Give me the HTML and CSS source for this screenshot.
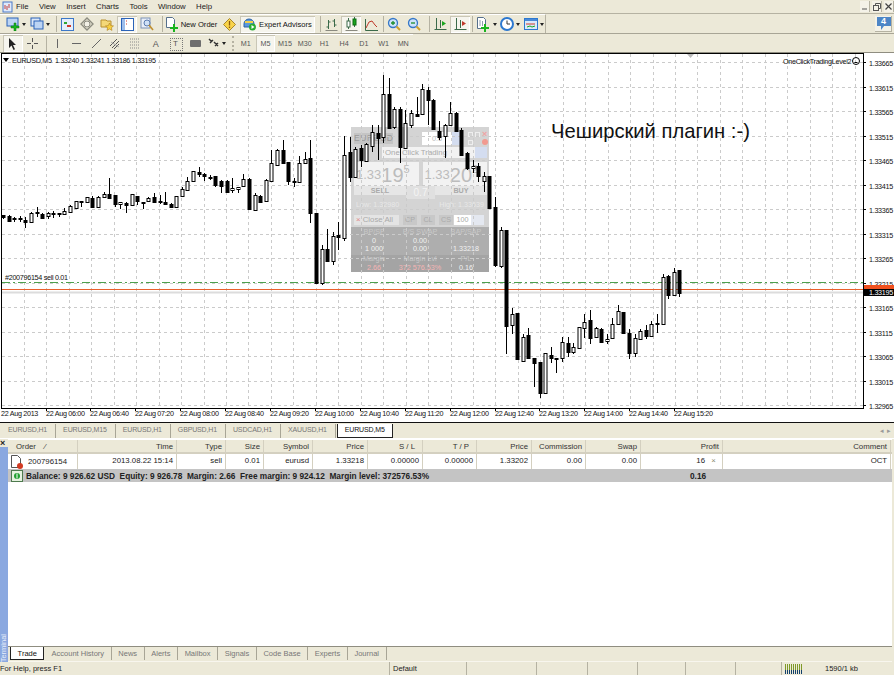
FILE: index.html
```html
<!DOCTYPE html>
<html lang="en">
<head>
    <meta charset="UTF-8">
    <meta name="viewport" content="width=device-width, initial-scale=1.0">
    <title>MetaTrader 4</title>
    <link rel="stylesheet" href="styles.css">
</head>
<body>
    <!-- Menu bar -->
    <div class="menubar">
        <svg class="app-icon" width="11" height="12" viewBox="0 0 11 12"><rect x="1" y="1" width="9" height="10" fill="#dfe9fa" stroke="#4a78c8"/><path d="M3 8V4M5 9V5M7 7V3" stroke="#c04040"/></svg>
        <span class="menu-item">File</span>
        <span class="menu-item">View</span>
        <span class="menu-item">Insert</span>
        <span class="menu-item">Charts</span>
        <span class="menu-item">Tools</span>
        <span class="menu-item">Window</span>
        <span class="menu-item">Help</span>
        <div class="window-btns">
            <span class="win-btn"><svg width="7" height="7"><path d="M1 6h5" stroke="#555"/></svg></span>
            <span class="win-btn"><svg width="8" height="8" fill="none" stroke="#555"><path d="M2.500 2.500v-2h5v5h-2"/><rect x=".5" y="2.500" width="5" height="5"/></svg></span>
            <span class="win-btn"><svg width="7" height="7"><path d="M.5.5l6 6M6.500.5l-6 6" stroke="#444" stroke-width="1.200"/></svg></span>
        </div>
    </div>

    <!-- Toolbars -->
    <div class="toolbar-row">
        <div class="toolbar tb-main">
            <span class="btn dd"><svg width="14" height="14" viewBox="0 0 14 14"><rect x="1" y="1" width="11" height="8" fill="#bcd4f4" stroke="#2b63b8"/><path d="M8 6h2v3h3v2h-3v3H8v-3H5V9h3z" fill="#19b41e" stroke="#0b7a10" stroke-width=".5"/></svg><i class="caret"></i></span>
            <span class="btn dd"><svg width="14" height="14" viewBox="0 0 14 14"><rect x="1" y="1" width="9" height="8" fill="#dbe7f8" stroke="#2b63b8"/><rect x="4" y="4" width="9" height="8" fill="#bcd4f4" stroke="#2b63b8"/></svg><i class="caret"></i></span>
            <span class="sep"></span>
            <span class="btn"><svg width="13" height="13" viewBox="0 0 13 13"><rect x=".5" y=".5" width="12" height="12" fill="#e4eefb" stroke="#3d78c8"/><path d="M3 4h3v2H3z" fill="#2fa52f"/><path d="M6 7h4v2H6z" fill="#d03a2a"/></svg></span>
            <span class="btn"><svg width="14" height="14" viewBox="0 0 14 14"><path d="M7 1l6 6-6 6-6-6z" fill="none" stroke="#8c8c80" stroke-width="1.400"/><circle cx="7" cy="7" r="3" fill="#f2f0e6" stroke="#8c8c80"/></svg></span>
            <span class="btn"><svg width="14" height="14" viewBox="0 0 14 14"><path d="M1 3h5l1 1h4v6H1z" fill="#f4d878" stroke="#b89030"/><path d="M9.500 6l1.200 2.600 2.800.3-2.100 1.800.6 2.700-2.500-1.400-2.500 1.400.6-2.700L5.500 8.900l2.800-.3z" fill="#f8d040" stroke="#b08020" stroke-width=".6"/></svg></span>
            <span class="btn pressed"><svg width="13" height="13" viewBox="0 0 13 13"><rect x=".5" y=".5" width="12" height="12" fill="#fff" stroke="#2b63b8"/><rect x="1" y="1" width="3" height="11" fill="#9dbdea"/><path d="M5 3h1M5 6h1" stroke="#d03a2a"/></svg></span>
            <span class="btn"><svg width="14" height="14" viewBox="0 0 14 14"><rect x="1" y="1" width="9" height="10" fill="#e8eef8" stroke="#7c93b8"/><circle cx="7" cy="6" r="3" fill="#cfe0f6" stroke="#5a7cb0"/><path d="M9 8l4 5" stroke="#c09030" stroke-width="1.600"/></svg></span>
            <span class="sep narrow"></span>
            <span class="btn text-btn order-btn"><svg width="14" height="15" viewBox="0 0 14 15"><path d="M1.500.5h6l2 2v8h-8z" fill="#fff" stroke="#56708c"/><path d="M8 7h2v3h3v2h-3v3H8v-3H5v-2h3z" fill="#19b41e"/></svg>New Order</span>
            <span class="btn"><svg width="13" height="13" viewBox="0 0 13 13"><path d="M6.500.5l6 6-6 6-6-6z" fill="#f9d44a" stroke="#a8872c"/><path d="M6.500 3v4.500M6.500 8.500v1.500" stroke="#8a5a10" stroke-width="1.300"/></svg></span>
            <span class="btn text-btn ea-btn"><svg width="14" height="14" viewBox="0 0 14 14"><path d="M1 7a5 5 0 0 1 10 0v3H1z" fill="#5a98dc" stroke="#2b63a8"/><path d="M2 5h8" stroke="#f2cf4a" stroke-width="2"/><circle cx="9.500" cy="10" r="3.500" fill="#28ad32"/><path d="M8.500 8l3 2-3 2z" fill="#fff"/></svg>Expert Advisors</span>
            <span class="sep"></span>
            <span class="btn"><svg width="13" height="13" viewBox="0 0 13 13" fill="none" stroke="#3b6a4a"><path d="M.5 12.500h12" stroke="#8a8a80"/><path d="M3.500 2v9M1.500 9h2M3.500 4h2"/><path d="M9.500 1v8M7.500 3h2M9.500 7h2"/></svg></span>
            <span class="btn pressed"><svg width="13" height="14" viewBox="0 0 13 14"><path d="M.5 13.500h12" stroke="#8a8a80"/><path d="M3.500 1v11M9.500 0v10" stroke="#3b6a4a"/><rect x="2" y="4" width="3" height="6" fill="#fff" stroke="#3b6a4a"/><rect x="8" y="2" width="3" height="6" fill="#19a51e" stroke="#0b6a10"/></svg></span>
            <span class="btn"><svg width="13" height="13" viewBox="0 0 13 13" fill="none"><path d="M.5 1v11.500H13" stroke="#3b6a4a"/><path d="M1 10l3-6 3-1 3 4 2 2" stroke="#c0392b"/></svg></span>
            <span class="sep tiny"></span>
            <span class="btn"><svg width="14" height="14" viewBox="0 0 14 14"><circle cx="6" cy="6" r="4.500" fill="#cfe3fa" stroke="#3678c8" stroke-width="1.300"/><path d="M4 6h4M6 4v4" stroke="#1d8f2a" stroke-width="1.300"/><path d="M9.500 9.500l3.500 3.500" stroke="#d0a030" stroke-width="2"/></svg></span>
            <span class="btn"><svg width="14" height="14" viewBox="0 0 14 14"><circle cx="6" cy="6" r="4.500" fill="#cfe3fa" stroke="#3678c8" stroke-width="1.300"/><path d="M4 6h4" stroke="#1d8f2a" stroke-width="1.300"/><path d="M9.500 9.500l3.500 3.500" stroke="#d0a030" stroke-width="2"/></svg></span>
            <span class="sep"></span>
            <span class="btn"><svg width="13" height="13" viewBox="0 0 13 13" fill="none"><path d="M2.500 0v11M.5 11.500h12M6.500 2v8" stroke="#3b6a4a"/><path d="M8 3l4 2.500L8 8z" fill="#19a51e"/></svg></span>
            <span class="btn pressed"><svg width="13" height="13" viewBox="0 0 13 13" fill="none"><path d="M2.500 0v11M.5 11.500h12M6.500 2v8" stroke="#3b6a4a"/><path d="M8 3l4 2.500L8 8z" fill="#c0392b"/></svg></span>
            <span class="sep tiny"></span>
            <span class="btn dd"><svg width="15" height="15" viewBox="0 0 15 15"><path d="M1.500.5h6l2 2v9h-8z" fill="#fff" stroke="#56708c"/><path d="M4 3v6M6.500 4v5" stroke="#90a0b0"/><path d="M8 7h2v3h3v2h-3v3H8v-3H5v-2h3z" fill="#19b41e"/></svg><i class="caret"></i></span>
            <span class="btn dd"><svg width="14" height="14" viewBox="0 0 14 14"><circle cx="7" cy="7" r="6" fill="#fff" stroke="#2c78d0" stroke-width="2"/><path d="M7 3.500V7h3" stroke="#333" fill="none"/></svg><i class="caret"></i></span>
            <span class="btn dd"><svg width="14" height="12" viewBox="0 0 14 12"><rect x=".5" y=".5" width="13" height="11" fill="#dbeafa" stroke="#2c78d0"/><rect x="1" y="1" width="12" height="2" fill="#4a8ad8"/><path d="M2 6h9" stroke="#d03a2a"/><path d="M3 9l3-1 2 1 3-1" stroke="#19a51e" fill="none"/></svg><i class="caret"></i></span>
        </div>
        <div class="notify">
            <svg width="16" height="15" viewBox="0 0 16 15"><path d="M1 1h14v9H8l-3 4v-4H1z" fill="#4d86c6"/></svg>
            <span class="notify-num">4</span>
        </div>
    </div>
    <div class="toolbar-row row-low">
        <div class="toolbar tb-tools">
            <span class="btn pressed"><svg width="9" height="12" viewBox="0 0 9 12"><path d="M1 0v10l2.500-2.500L5.500 12l1.500-.8-2-4.200H8z" fill="#222"/></svg></span>
            <span class="btn"><svg width="13" height="13" viewBox="0 0 13 13"><path d="M6.500 1v4M6.500 8v4M1 6.500h4M8 6.500h4" stroke="#555"/></svg></span>
            <span class="sep tiny"></span>
            <span class="btn"><svg width="3" height="11"><path d="M1.500 1v9" stroke="#666"/></svg></span>
            <span class="btn"><svg width="11" height="3"><path d="M1 1.500h9" stroke="#666"/></svg></span>
            <span class="btn"><svg width="11" height="11"><path d="M1 10L10 1" stroke="#666"/></svg></span>
            <span class="btn"><svg width="14" height="13" viewBox="0 0 14 13" fill="none" stroke="#555"><path d="M1 9l7-7M3 11l7-7M5 12l5-5"/><path d="M2 5l8 5" stroke="#aaa"/></svg></span>
            <span class="btn"><svg width="14" height="12" viewBox="0 0 14 12" stroke="#888" stroke-dasharray="1 1"><path d="M1 1h10M1 4h10M1 7h10M1 10h10"/></svg></span>
            <span class="btn glyph">A</span>
            <span class="btn glyph boxed">T</span>
            <span class="btn"><svg width="11" height="7"><rect width="11" height="7" rx="1" fill="#6e6e6e"/></svg></span>
            <span class="btn dd"><svg width="12" height="11" viewBox="0 0 12 11"><path d="M1 1l3 3M2 5l3-3M6 4l4 4M7 8l3-3" stroke="#333" stroke-width="1.400"/></svg><i class="caret"></i></span>
            <span class="grip"></span>
            <span class="btn tf">M1</span>
            <span class="btn tf pressed">M5</span>
            <span class="btn tf">M15</span>
            <span class="btn tf">M30</span>
            <span class="btn tf">H1</span>
            <span class="btn tf">H4</span>
            <span class="btn tf">D1</span>
            <span class="btn tf">W1</span>
            <span class="btn tf">MN</span>
        </div>
    </div>

    <!-- Chart window -->
    <div class="chart-area">
        <!-- One click trading panel sits under the candles -->
        <div class="panel">
            <div class="panel-top">
                <span class="symbol">EURUSD</span>
                <span class="lot-input">0.6</span><span class="combo-arrow"></span>
                <span class="panel-icons"><i class="mini"></i><i class="mini"></i><b>×</b><i class="mini"></i><i class="dot"></i></span>
            </div>
            <div class="panel-mode">
                <span class="mode-box">One Click Trading</span><span class="combo-arrow tall"></span>
            </div>
            <div class="quotes">
                <div class="quote"><small>1.33</small><big>19</big><sup>5</sup></div>
                <div class="quote"><small>1.33</small><big>20</big><sup>2</sup></div>
            </div>
            <div class="sides">
                <span class="side">SELL</span>
                <span class="side-lot">0.7</span>
                <span class="side">BUY</span>
            </div>
            <div class="range"><span>Low: 1.32980</span><span>High: 1.33639</span></div>
            <div class="actions">
                <span class="action close-all"><em>×</em> Close All</span>
                <span class="action">CP</span>
                <span class="action">CL</span>
                <span class="action">CS</span>
                <span class="count">100</span><span class="spin"></span>
            </div>
            <div class="stats">
                <span>BP/SF</span><span>B/S SWAP</span><span>BAP/SAP</span>
                <span class="val">0</span><span class="val">0.00</span><span class="val">-</span>
                <span class="val">1 000</span><span class="val">0.00</span><span class="val">1.33218</span>
            </div>
            <div class="stats margin">
                <span>Margin</span><span>Margin Lvl</span><span>P/L</span>
                <span class="pink">2.66</span><span class="pink">372 576.53%</span><span class="val">0.16</span>
            </div>
        </div>
        <svg class="chart" id="chart" width="894" height="369" viewBox="0 53 894 369"></svg>
        <div class="chart-note">Чеширский плагин :-)</div>
    </div>

    <!-- Chart tabs -->
    <div class="chart-tabs">
        <span class="ctab">EURUSD,H1</span>
        <span class="ctab">EURUSD,M15</span>
        <span class="ctab">EURUSD,H1</span>
        <span class="ctab">GBPUSD,H1</span>
        <span class="ctab">USDCAD,H1</span>
        <span class="ctab">XAUUSD,H1</span>
        <span class="ctab active">EURUSD,M5</span>
        <span class="tab-arrows">◂ &nbsp;▸</span>
    </div>

    <!-- Terminal -->
    <div class="terminal">
        <div class="side-strip">
            <span class="close-x">×</span>
            <div class="strip-blue"><span>Terminal</span></div>
        </div>
        <div class="term-main">
            <div class="trow thead">
                <span class="left">Order &nbsp; &nbsp;⁄</span><span>Time</span><span>Type</span><span>Size</span><span>Symbol</span><span>Price</span><span class="ctr">S / L</span><span class="ctr">T / P</span><span>Price</span><span>Commission</span><span>Swap</span><span>Profit</span><span>Comment</span>
            </div>
            <div class="trow tdata">
                <span class="left order-cell"><svg width="14" height="14" viewBox="0 0 14 14"><path d="M1.500.5h6l3 3v9h-9z" fill="#fff" stroke="#555"/><circle cx="10" cy="11" r="3" fill="#d23a22"/></svg>200796154</span><span>2013.08.22 15:14</span><span>sell</span><span>0.01</span><span>eurusd</span><span>1.33218</span><span>0.00000</span><span>0.00000</span><span>1.33202</span><span>0.00</span><span>0.00</span><span class="profit">16<i>×</i></span><span>ОСТ</span>
            </div>
            <div class="balance">
                <svg width="12" height="12" viewBox="0 0 12 12"><rect x=".5" y=".5" width="11" height="11" fill="#e6f2e0" stroke="#4e7a4e"/><circle cx="6" cy="6" r="3" fill="#20a030"/><path d="M6 3.500v5" stroke="#fff"/></svg>
                <span class="bal-text">Balance: 9 926.62 USD&nbsp; Equity: 9 926.78&nbsp; Margin: 2.66&nbsp; Free margin: 9 924.12&nbsp; Margin level: 372576.53%</span>
                <span class="bal-profit">0.16</span>
            </div>
            <div class="term-empty"></div>
            <div class="term-tabs">
                <span class="ttab active">Trade</span>
                <span class="ttab">Account History</span>
                <span class="ttab">News</span>
                <span class="ttab">Alerts</span>
                <span class="ttab">Mailbox</span>
                <span class="ttab">Signals</span>
                <span class="ttab">Code Base</span>
                <span class="ttab">Experts</span>
                <span class="ttab">Journal</span>
            </div>
        </div>
    </div>

    <!-- Status bar -->
    <div class="statusbar">
        <span class="cell help">For Help, press F1</span>
        <span class="cell prof">Default</span>
        <span class="cell c70"></span>
        <span class="cell c51"></span>
        <span class="cell c50"></span>
        <span class="cell c48"></span>
        <span class="cell c50"></span>
        <span class="cell c46"></span>
        <span class="cell conn"><i class="bars"></i><span>1590/1 kb</span></span>
    </div>

    <script src="chart.js"></script>
</body>
</html>
```

FILE: styles.css
```css
* {
    margin: 0;
    padding: 0;
    box-sizing: border-box;
}

body {
    width: 894px;
    height: 675px;
    overflow: hidden;
    display: flex;
    flex-direction: column;
    background-color: #ece9d8;
    color: #222;
    font-family: 'Liberation Sans', Arial, sans-serif;
    font-size: 7.8px;
}

/* Menu bar */
.menubar {
    height: 14px;
    flex: none;
    display: flex;
    align-items: center;
    border-bottom: 1px solid #b5b2a2;
    font-size: 7.8px;
}

.app-icon {
    margin: 0 3px 0 2px;
}

.menu-item {
    margin-right: 10.4px;
}

.window-btns {
    margin-left: auto;
    display: flex;
    gap: 2px;
}

.win-btn {
    width: 10px;
    height: 11px;
    display: flex;
    align-items: center;
    justify-content: center;
    background-color: #f4f2e8;
    border-right: 1px solid #b5b2a2;
}

/* Toolbars */
.toolbar-row {
    height: 20px;
    flex: none;
    display: flex;
    justify-content: space-between;
    border-bottom: 1px solid #a8a596;
}

.toolbar-row.row-low {
    height: 19px;
    border-bottom: 1px solid #8f8d80;
}

.toolbar {
    display: flex;
    align-items: center;
    border-top: 1px solid #fff;
}

.tb-main {
    width: 546px;
    padding-left: 3px;
    border-right: 1px solid #b5b2a2;
}

.tb-tools {
    padding-left: 3px;
}

.btn {
    flex: none;
    width: 20px;
    height: 17px;
    display: flex;
    align-items: center;
    justify-content: center;
}

.tb-tools .btn {
    width: 19.7px;
}

.btn.dd {
    width: 24px;
    justify-content: flex-start;
    padding-left: 3px;
    gap: 2px;
}

.tb-tools .btn.dd {
    width: 24px;
}

.caret {
    width: 0;
    height: 0;
    border-left: 2.5px solid transparent;
    border-right: 2.5px solid transparent;
    border-top: 3px solid #222;
}

.pressed {
    background-color: #f6f5ee;
    box-shadow: inset 1px 1px 0 #c9c6b6, inset -1px -1px 0 #fff;
}

.sep {
    flex: none;
    width: 6px;
    height: 16px;
    border-right: 1px solid #b5b2a2;
}

.sep.tiny {
    width: 3px;
}

.tb-tools .sep.tiny {
    width: 5px;
}

.grip {
    flex: none;
    width: 7px;
    height: 15px;
    border-left: 2px dotted #b5b2a2;
    margin-left: 3px;
    margin-right: -3px;
}

.text-btn {
    gap: 2px;
    font-size: 7.6px;
    color: #111;
    white-space: nowrap;
}

.order-btn {
    width: 56px;
}

.ea-btn {
    width: 75px;
    margin-left: 1px;
    background-color: #f6f5ee;
    box-shadow: inset 1px 1px 0 #c9c6b6, inset -1px -1px 0 #fff;
}

.tf {
    font-size: 7.2px;
    color: #555;
}

.glyph {
    font-size: 9px;
    color: #555;
}

.glyph.boxed {
    font-size: 8px;
    position: relative;
}

.glyph.boxed::after {
    content: "";
    position: absolute;
    left: 4px;
    top: 3px;
    width: 11px;
    height: 11px;
    border: 1px dotted #777;
}

.notify {
    position: relative;
    width: 17px;
    height: 16px;
    margin: 2px 2px 0 0;
    background-color: #f4f2e8;
    box-shadow: inset -1px -1px 0 #b5b2a2;
}

.notify svg {
    position: absolute;
    left: 1px;
    top: 0;
}

.notify-num {
    position: absolute;
    left: 6px;
    top: 0;
    color: #fff;
    font-size: 9px;
    font-weight: bold;
}

/* Chart */
.chart-area {
    position: relative;
    height: 369px;
    background-color: #fff;
    flex: none;
}

.chart {
    position: absolute;
    left: 0;
    top: 0;
    font-size: 7.2px;
    letter-spacing: -0.3px;
}

.chart-note {
    position: absolute;
    left: 551px;
    top: 67px;
    font-size: 20.2px;
    color: #111;
    white-space: nowrap;
}

.wick { stroke: #000; }
.body-up { fill: #fff; stroke: #000; }
.body-down { fill: #000; stroke: #000; }
.grid-line { stroke: #cbcbcb; stroke-dasharray: 3 3; }
.chart-label { fill: #111; }

/* One click panel */
.panel {
    position: absolute;
    left: 351px;
    top: 74px;
    width: 138px;
    height: 144px;
    background-color: #d4d4d4;
    color: #f4f4f4;
    display: flex;
    flex-direction: column;
    font-size: 7.2px;
}

.panel-top {
    height: 20px;
    flex: none;
    display: flex;
    align-items: center;
    padding: 2px 0 0 3px;
}

.symbol {
    width: 39px;
    height: 11px;
    line-height: 11px;
    text-align: center;
    font-size: 8.5px;
    letter-spacing: 0.6px;
    background-color: #c4c4c4;
    color: #999;
    margin-right: 29px;
}

.lot-input {
    width: 30px;
    height: 13px;
    line-height: 13px;
    text-align: center;
    background-color: #fff;
    color: #bbb;
}

.combo-arrow {
    width: 8px;
    height: 13px;
    background-color: #d4ddf0;
}

.combo-arrow.tall {
    width: 12px;
    height: 11px;
}

.panel-icons {
    width: 20px;
    margin-left: 8px;
    display: flex;
    flex-wrap: wrap;
    align-items: center;
    gap: 1px 2px;
    color: #eee;
}

.panel-icons b {
    width: 6px;
    line-height: 7px;
    font-size: 9px;
    color: #f0a4a4;
}

.mini {
    width: 5px;
    height: 5px;
    border: 1px solid #eee;
}

.dot {
    width: 6px;
    height: 6px;
    margin-left: 7px;
    border-radius: 50%;
    background-color: #f29a90;
}

.panel-mode {
    height: 11px;
    flex: none;
    display: flex;
    padding-left: 31px;
    margin-bottom: 4px;
}

.mode-box {
    width: 93px;
    background-color: #f2f2f2;
    color: #aaa;
    padding-left: 3px;
    line-height: 11px;
    font-size: 7.8px;
}

.quotes {
    flex: none;
    display: flex;
    gap: 4px;
    padding: 0 2px 0 3px;
}

.quote {
    flex: 1;
    height: 24px;
    background-color: #f2f2f2;
    color: #bcbcbc;
    display: flex;
    align-items: flex-end;
    padding-left: 2px;
    line-height: 22px;
}

.quote small {
    font-size: 13px;
}

.quote big {
    font-size: 20px;
}

.quote sup {
    font-size: 11px;
    line-height: 14px;
    align-self: flex-start;
}

.sides {
    flex: none;
    display: flex;
    padding: 0 2px 0 3px;
    height: 13px;
}

.side {
    flex: 1;
    height: 9px;
    line-height: 9px;
    text-align: center;
    background-color: #e6e6e6;
    color: #aaa;
    font-weight: bold;
}

.side-lot {
    width: 29px;
    text-align: center;
    background-color: #e0e0e0;
    color: #f4f4f4;
    font-size: 10px;
    line-height: 13px;
}

.range {
    flex: none;
    display: flex;
    justify-content: space-between;
    height: 14px;
    padding: 0 5px;
    line-height: 12px;
    color: #e8e8e8;
}

.actions {
    flex: none;
    display: flex;
    align-items: center;
    gap: 4px;
    height: 14px;
    padding: 0 3px;
}

.action {
    width: 14px;
    height: 10px;
    line-height: 10px;
    text-align: center;
    background-color: #c8c8c8;
    color: #aaa;
}

.close-all {
    width: 45px;
    background-color: #e4e4e4;
    font-size: 7.8px;
    text-align: left;
    padding-left: 2px;
}

.close-all em {
    color: #e08888;
    font-style: normal;
}

.count {
    width: 17px;
    height: 10px;
    line-height: 10px;
    text-align: center;
    background-color: #fff;
    color: #aaa;
    margin-left: -3px;
}

.spin {
    width: 13px;
    height: 10px;
    margin-left: -4px;
    background-color: #e4e8f0;
}

.stats {
    height: 28px;
    flex: none;
    display: grid;
    grid-template-columns: repeat(3, 1fr);
    grid-auto-rows: 8.5px;
    background-color: #aeaeae;
    text-align: center;
    line-height: 8.5px;
    padding-top: 1px;
    color: #c8c8c8;
    white-space: nowrap;
}

.stats.margin {
    height: 17px;
    background-color: #a4a4a4;
    padding-top: 0;
}

.val {
    color: #f2f2f2;
}

.pink {
    color: #f4b4b4;
}

/* Chart tabs */
.chart-tabs {
    height: 16px;
    display: flex;
    align-items: center;
    padding-left: 1px;
    border-top: 1px solid #111;
    color: #777;
    font-size: 7px;
    letter-spacing: -0.15px;
    flex: none;
}

.ctab {
    height: 14px;
    line-height: 12px;
    padding: 0 8px 0 7px;
    border-right: 1px solid #a8a596;
    white-space: nowrap;
}

.ctab.active {
    background-color: #fff;
    border: 1px solid #222;
    border-top: none;
    color: #111;
    margin-left: 1px;
    padding: 0 7px;
}

.tab-arrows {
    margin-left: auto;
    margin-right: 3px;
    color: #999;
}

/* Terminal */
.terminal {
    flex: none;
    height: 224px;
    display: flex;
    border-top: 1px solid #fff;
}

.side-strip {
    width: 8px;
    display: flex;
    flex-direction: column;
}

.close-x {
    height: 8px;
    line-height: 8px;
    font-weight: bold;
    font-size: 9px;
    color: #222;
}

.strip-blue {
    flex: 1;
    background-color: #8aa8e0;
    display: flex;
    align-items: flex-end;
}

.strip-blue span {
    writing-mode: vertical-rl;
    transform: rotate(180deg);
    font-size: 7.5px;
    color: #e8eefa;
    width: 8px;
    line-height: 8px;
}

.term-main {
    flex: 1;
    display: flex;
    flex-direction: column;
    background-color: #fff;
    margin-right: 2px;
}

.trow {
    flex: none;
    display: grid;
    grid-template-columns: 70px 99px 49px 38px 49px 55px 55px 54px 55px 54px 55px 82px 168px;
}

.trow > span {
    text-align: right;
    white-space: nowrap;
    padding-right: 3px;
    border-right: 1px solid #d4d0c0;
}

.trow > span.left {
    text-align: left;
}

.trow > span.ctr {
    padding-right: 7px;
}

.thead {
    height: 15px;
    line-height: 13px;
    background-color: #ece9d8;
    border-top: 1px solid #fff;
    border-bottom: 2px solid #d4d0c0;
    color: #333;
}

.thead > span.left {
    padding-left: 8px;
}

.tdata {
    height: 15px;
    line-height: 14px;
    color: #222;
}

.order-cell {
    display: flex;
    align-items: center;
    gap: 4px;
    padding-left: 2px;
}

.trow > .profit {
    padding-right: 0;
}

.profit i {
    display: inline-block;
    width: 17px;
    text-align: center;
    font-style: normal;
    color: #8c8a70;
}

.balance {
    height: 13px;
    flex: none;
    display: flex;
    align-items: center;
    background-color: #c4c4c4;
    font-weight: bold;
    font-size: 8.3px;
    color: #222;
    padding-left: 3px;
    position: relative;
}

.bal-text {
    margin-left: 3px;
    white-space: nowrap;
}

.bal-profit {
    position: absolute;
    left: 682px;
}

.term-empty {
    flex: 1;
}

/* Terminal tabs */
.term-tabs {
    height: 16px;
    flex: none;
    display: flex;
    padding-left: 2px;
    background-color: #ece9d8;
    border-top: 1px solid #8f8d80;
    color: #777;
    font-size: 7.5px;
    border-bottom: 1px solid #f8f6ee;
}

.ttab {
    height: 13px;
    line-height: 13px;
    padding: 0 6.6px;
    border-right: 1px solid #a8a596;
    white-space: nowrap;
}

.ttab.active {
    background-color: #fff;
    border: 1px solid #222;
    border-top: none;
    color: #111;
    width: 34px;
    margin-right: 1px;
}

/* Status bar */
.statusbar {
    flex: 1;
    display: flex;
    align-items: center;
    font-size: 7.5px;
}

.cell {
    height: 100%;
    line-height: 13px;
    padding-left: 3px;
    border-right: 1px solid #b5b2a2;
    flex: none;
}

.help { width: 390px; padding-left: 0; }
.prof { width: 77px; }
.c70 { width: 70px; }
.c51 { width: 51px; }
.c50 { width: 50px; }
.c48 { width: 48px; }
.c46 { width: 46px; }

.conn {
    display: flex;
    border: none;
    padding-left: 3px;
    gap: 23px;
}

.bars {
    width: 17px;
    height: 10px;
    margin-top: 2px;
    background:
        repeating-linear-gradient(90deg, transparent 0 1px, #ece9d8 1px 2px),
        linear-gradient(#7f9a28 55%, #12406a 55%);
}
```

FILE: chart.js
```js
// each candle: [bullish, body top, body bottom, high, low] in page pixels
const candles = [
    [0,215,217,215,219],[0,216,221,215,222],[0,218,219,217,222],[0,218,219,216,222],[0,220,222,217,228],
    [1,213,222,212,222],[0,212,213,207,217],[0,214,218,213,218],[1,213,216,212,219],[0,213,214,211,218],
    [0,213,214,213,217],[1,211,214,208,214],[1,206,212,205,213],[1,201,208,201,209],[1,201,202,201,207],
    [1,197,202,197,203],[0,198,207,196,208],[1,197,207,196,208],[1,194,197,192,198],[0,194,198,178,199],
    [0,195,204,195,207],[1,202,204,202,209],[0,203,205,202,213],[1,194,205,194,205],[0,196,201,196,205],
    [0,202,203,202,209],[1,198,201,197,202],[0,197,202,193,202],[0,201,202,195,204],[0,202,204,192,205],
    [0,204,207,203,208],[1,196,207,196,208],[1,189,196,187,197],[1,181,190,177,191],[1,171,181,171,181],
    [0,172,174,167,177],[0,174,176,173,181],[0,177,178,175,180],[0,176,185,176,187],[0,181,186,180,193],
    [0,181,192,180,193],[1,188,190,178,193],[1,187,189,187,193],[1,179,186,174,187],[0,179,209,178,210],
    [1,195,210,193,211],[0,196,202,195,203],[1,180,201,179,202],[1,163,181,150,182],[1,150,165,149,166],
    [0,150,163,140,163],[0,162,181,162,185],[0,181,182,178,187],[1,163,182,156,182],[1,159,163,152,164],
    [0,158,213,140,223],[0,213,283,213,283],[1,249,283,245,285],[0,249,261,229,262],[1,236,261,232,265],
    [0,235,237,222,250],[1,155,238,136,241],[0,152,177,137,182],[1,149,177,147,178],[0,148,160,145,167],
    [1,144,161,143,162],[1,132,146,125,152],[0,133,138,125,160],[1,94,137,75,143],[0,94,128,78,129],
    [1,109,127,107,129],[0,109,147,107,163],[1,123,148,110,149],[1,113,125,110,128],[0,114,116,97,117],
    [1,89,114,84,115],[0,90,100,87,125],[0,100,129,99,130],[0,131,137,121,140],[1,125,136,124,158],
    [1,113,125,102,126],[0,113,131,112,132],[0,130,155,128,156],[0,153,168,152,170],[1,166,168,160,173],
    [0,166,176,163,182],[1,176,181,172,192],[0,176,208,176,208],[0,207,265,197,267],[1,230,266,227,268],
    [0,230,326,230,354],[1,314,325,308,334],[0,313,359,313,359],[1,337,361,334,361],[0,335,358,328,358],
    [0,358,363,358,387],[0,362,393,362,398],[1,353,393,353,393],[0,355,358,347,363],[0,358,359,358,373],
    [1,342,358,337,362],[0,343,352,337,357],[1,347,352,343,354],[1,327,348,327,348],[1,322,328,314,338],
    [0,320,338,310,344],[1,328,337,327,337],[0,329,342,328,343],[1,339,341,334,344],[1,324,338,318,339],
    [1,311,324,305,325],[0,312,333,312,333],[0,333,353,329,359],[1,338,353,334,357],[1,331,339,329,339],
    [0,330,336,325,339],[1,324,336,321,336],[0,323,324,314,333],[1,277,324,274,325],[0,276,295,275,299],
    [1,272,295,268,296],[0,270,293,270,297]
];

const times = ['06:00','06:40','07:20','08:00','08:40','09:20','10:00','10:40','11:20','12:00','12:40','13:20','14:00','14:40','15:20'];

const svg = document.getElementById('chart');
let markup = '';

function line(x1, y1, x2, y2, attrs) {
    markup += `<line x1="${x1}" y1="${y1}" x2="${x2}" y2="${y2}" ${attrs}/>`;
}

function label(x, y, text, attrs) {
    markup += `<text x="${x}" y="${y}" class="chart-label" ${attrs || ''}>${text}</text>`;
}

// grid
for (let i = 1; i * 22.45 < 862; i++) {
    const x = Math.round(1.5 + i * 22.45) + 0.5;
    line(x, 54, x, 408, 'class="grid-line"');
}
for (let i = 0; i < 15; i++) {
    const y = Math.round(62 + i * 24.5) + 0.5;
    line(2, y, 863, y, 'class="grid-line"');
    line(863, y, 866, y, 'stroke="#000"');
    label(869, y + 3, (1.33665 - i * 0.0005).toFixed(5));
}

// order lines
label(5, 280, '#200796154 sell 0.01');
line(2, 282.5, 863, 282.5, 'stroke="#4da04d" stroke-dasharray="8 3 2 3"');
line(2, 292.5, 863, 292.5, 'stroke="#dcdcdc" stroke-width="2"');
line(2, 289.5, 863, 289.5, 'stroke="#e8602c"');

// candles
candles.forEach((c, i) => {
    const x = Math.round(3 + i * 5.59);
    line(x + 0.5, c[3], x + 0.5, c[4], 'class="wick"');
    const h = Math.max(c[2] - c[1], 1);
    markup += `<rect x="${x - 1}" y="${c[1] + 0.5}" width="3" height="${h}" class="${c[0] ? 'body-up' : 'body-down'}"/>`;
});

// frame and axis
markup += '<rect x="1.5" y="53.5" width="862" height="355" fill="none" stroke="#000"/>';
markup += '<rect x="864" y="285" width="30" height="4" fill="#f0501e"/>';
markup += '<rect x="864" y="289" width="30" height="7" fill="#000"/>';
label(869, 295, '1.33195', 'style="fill:#fff"');

// header texts
markup += '<path d="M3 58h6l-3 4z" fill="#000"/>';
label(12, 63, 'EURUSD,M5&#160; 1.33240 1.33241 1.33186 1.33195');
label(783, 64, 'OneClickTradingLevel2');
markup += '<circle cx="856" cy="61" r="3.5" fill="none" stroke="#000"/><path d="M854.5 62.5h3" stroke="#000"/>';
markup += '<path d="M687 54h7l-3.5 4z" fill="#bbb"/>';

// time scale
label(1, 416, '22 Aug 2013');
times.forEach((t, i) => {
    const x = Math.round(45.5 + i * 44.9);
    line(x + 0.5, 408, x + 0.5, 411, 'stroke="#000"');
    label(x, 416, '22 Aug ' + t);
});

svg.innerHTML = markup;
```
